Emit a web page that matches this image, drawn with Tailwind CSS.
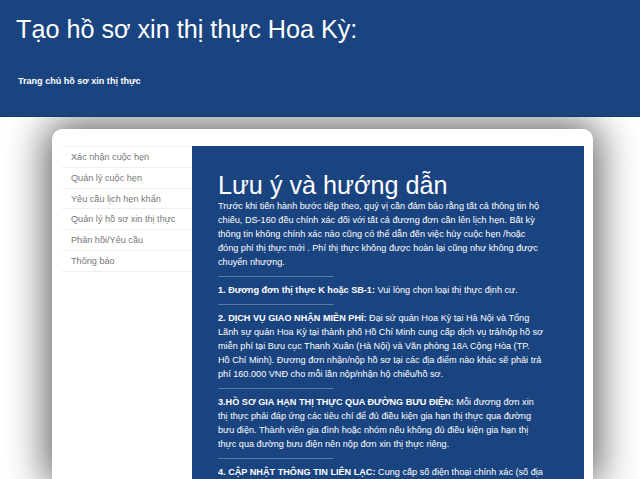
<!DOCTYPE html>
<html lang="vi">
<head>
    <meta charset="UTF-8">
    <title>Tạo hồ sơ xin thị thực Hoa Kỳ</title>
    <script src="https://cdn.jsdelivr.net/npm/@tailwindcss/browser@4"></script>
</head>
<body class="bg-white font-['Liberation_Sans',Arial,sans-serif]">
<div class="h-[479px] overflow-hidden">
    <header class="relative z-10 h-[117px] bg-[#1a4480] text-white px-4 border-b border-[#16396b]">
        <h1 class="pt-[14px] text-[25.2px] leading-[30px]">Tạo hồ sơ xin thị thực Hoa Kỳ:</h1>
        <a href="#" class="block mt-[30px] pl-[2px] text-[9.05px] leading-[14px] font-bold">Trang chủ hồ sơ xin thị thực</a>
    </header>

    <main class="mt-3 ml-[52px] w-[541px] bg-white rounded-t-[10px] shadow-[0_0_40px_5px_rgba(0,0,0,0.65)] pt-[17px] pl-[10px] pr-[9px] flex">
        <ul class="w-[130px] shrink-0 text-[9.15px] leading-[20px] text-[#777] border-t border-[#eee]">
            <li class="pl-[9px] h-[20.8px] border-b border-[#eee]">Xác nhận cuộc hẹn</li>
            <li class="pl-[9px] h-[20.8px] border-b border-[#eee]">Quản lý cuộc hẹn</li>
            <li class="pl-[9px] h-[20.8px] border-b border-[#eee]">Yêu cầu lịch hẹn khẩn</li>
            <li class="pl-[9px] h-[20.8px] border-b border-[#eee]">Quản lý hồ sơ xin thị thực</li>
            <li class="pl-[9px] h-[20.8px] border-b border-[#eee]">Phản hồi/Yêu cầu</li>
            <li class="pl-[9px] h-[20.8px] border-b border-[#eee]">Thông báo</li>
        </ul>

        <section class="w-[392px] bg-[#1a4480] text-white pt-[26px] pl-[26px] pr-[39.5px] text-[9.13px] leading-[14px]">
            <h2 class="text-[25.2px] leading-[26px] mb-[1px]">Lưu ý và hướng dẫn</h2>
            <p>Trước khi tiến hành bước tiếp theo, quý vị cần đảm bảo rằng tất cả thông tin hộ chiếu, DS-160 đều chính xác đối với tất cả đương đơn cần lên lịch hẹn. Bất kỳ thông tin không chính xác nào cũng có thể dẫn đến việc hủy cuộc hẹn /hoặc đóng phí thị thực mới . Phí thị thực không được hoàn lại cũng như không được chuyển nhượng.</p>
            <p class="text-[8.85px] text-white/50">—————————————</p>
            <p><b>1. Đương đơn thị thực K hoặc SB-1:</b> Vui lòng chọn loại thị thực định cư.</p>
            <p class="text-[8.85px] text-white/50">—————————————</p>
            <p><b>2. DỊCH VỤ GIAO NHẬN MIỄN PHÍ:</b> Đại sứ quán Hoa Kỳ tại Hà Nội và Tổng Lãnh sự quán Hoa Kỳ tại thành phố Hồ Chí Minh cung cấp dịch vụ trả/nộp hồ sơ miễn phí tại Bưu cục Thanh Xuân (Hà Nội) và Văn phòng 18A Cộng Hòa (TP.<br>Hồ Chí Minh). Đương đơn nhận/nộp hồ sơ tại các địa điểm nào khác sẽ phải trả phí 160.000 VNĐ cho mỗi lần nộp/nhận hộ chiếu/hồ sơ.</p>
            <p class="text-[8.85px] text-white/50">—————————————</p>
            <p><b>3.HỒ SƠ GIA HẠN THỊ THỰC QUA ĐƯỜNG BƯU ĐIỆN:</b> Mỗi đương đơn xin thị thực phải đáp ứng các tiêu chí để đủ điều kiện gia hạn thị thực qua đường bưu điện. Thành viên gia đình hoặc nhóm nếu không đủ điều kiện gia hạn thị thực qua đường bưu điện nên nộp đơn xin thị thực riêng.</p>
            <p class="text-[8.85px] text-white/50">—————————————</p>
            <p><b>4. CẬP NHẬT THÔNG TIN LIÊN LẠC:</b> Cung cấp số điện thoại chính xác (số địa</p>
        </section>
    </main>
</div>
</body>
</html>
